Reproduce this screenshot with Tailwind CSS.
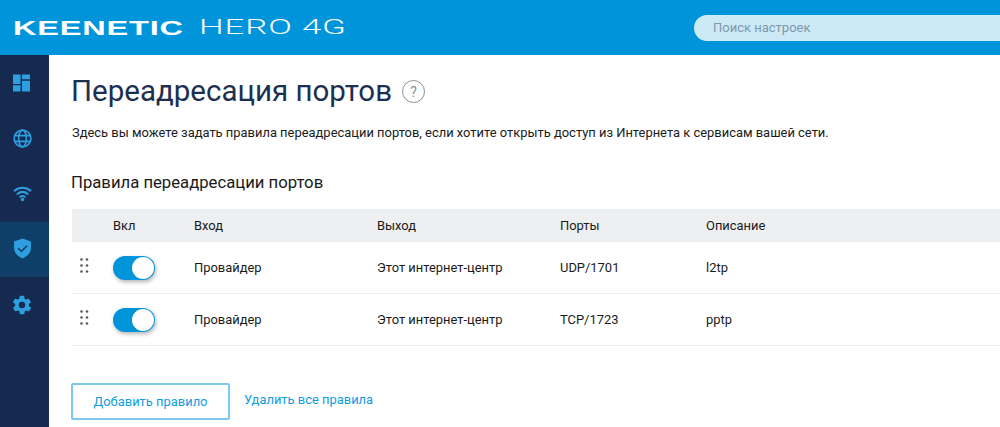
<!DOCTYPE html>
<html lang="ru">
<head>
  <meta charset="UTF-8" />
  <title>Keenetic Hero 4G</title>
  <script src="https://cdn.jsdelivr.net/npm/@tailwindcss/browser@4"></script>
</head>
<body class="h-[427px] w-[1000px] overflow-hidden bg-white font-['Roboto',sans-serif] text-[#1a1a1a]">
  <!-- header -->
  <header class="flex h-[55px] items-center justify-between bg-[#0095da] pl-[13px] text-white">
    <div class="flex h-[55px] items-center whitespace-nowrap">
      <span class="inline-block w-[186px] origin-left scale-x-[1.55] font-['Liberation_Sans',sans-serif] text-[21px] font-bold leading-none tracking-[0.5px]">KEENETIC</span>
      <span class="inline-block w-[146px] origin-left scale-x-[1.66] font-['Roboto',sans-serif] text-[21px] font-light leading-none tracking-[0.5px]">HERO 4G</span>
    </div>
    <div class="flex h-[26px] w-[306px] items-center rounded-l-full bg-[#cce9f8] pl-[19px] text-[13px] text-[#7d98a8]">Поиск настроек</div>
  </header>

  <div class="flex h-[372px]">
    <!-- sidebar -->
    <nav class="flex w-[49px] flex-col bg-[#152a4e] pt-[2px] text-[#2d9fe0]">
      <div class="flex h-[55px] items-center justify-center pb-[3px] pr-[6px]">
        <svg class="h-[18px] w-[17px]" viewBox="0 0 18 18" fill="currentColor"><path d="M0 0h8v10H0zM9.500 0H18v5H9.500zM0 11.500h8V18H0zM9.500 6.500H18V18H9.500z"/></svg>
      </div>
      <div class="flex h-[55px] items-center justify-center pb-[3px] pr-[5px]">
        <svg class="h-[19px] w-[19px]" viewBox="0 0 20 20" fill="none" stroke="currentColor" stroke-width="1.700"><circle cx="10" cy="10" r="8.800"/><ellipse cx="10" cy="10" rx="4" ry="8.800"/><path d="M1.500 7h17M1.500 13h17"/></svg>
      </div>
      <div class="flex h-[55px] items-center justify-center pb-[2px] pr-[5px]">
        <svg class="h-[15px] w-[19px]" viewBox="0 0 20 16" fill="none" stroke="currentColor" stroke-width="2.100" stroke-linecap="round"><path d="M1.500 5c5-4.300 12-4.300 17 0M4.500 8.500c3.300-2.700 7.700-2.700 11 0M7.500 11.500c1.500-1 3.500-1 5 0"/><circle cx="10" cy="14.300" r="0.800" fill="currentColor"/></svg>
      </div>
      <div class="flex h-[55px] items-center justify-center bg-[#0f3f68] pb-[2px] pr-[5px]">
        <svg class="h-[21px] w-[17px]" viewBox="0 0 18 21" fill="currentColor"><path fill-rule="evenodd" d="M9 0l9 3.200v6.300c0 5.200-3.700 9.500-9 11.500-5.300-2-9-6.300-9-11.500V3.200zM13.300 7L7.800 12.300 5 9.600l-1.200 1.200 4 3.900 6.700-6.500z"/></svg>
      </div>
      <div class="flex h-[55px] items-center justify-center pr-[5px]">
        <svg class="h-[22px] w-[22px]" viewBox="0 0 24 24" fill="currentColor"><path d="M19.400 13c.1-.3.100-.7.100-1s0-.7-.1-1l2.100-1.600c.2-.2.200-.4.100-.6l-2-3.500c-.1-.2-.4-.3-.6-.2l-2.500 1c-.5-.4-1.100-.7-1.700-1l-.4-2.600c0-.3-.2-.5-.5-.5h-4c-.3 0-.5.200-.5.500l-.4 2.600c-.6.300-1.200.6-1.700 1l-2.500-1c-.2-.1-.5 0-.6.200l-2 3.500c-.1.200-.1.400.1.600L4.600 11c-.1.300-.1.700-.1 1s0 .7.100 1l-2.100 1.600c-.2.200-.2.400-.1.600l2 3.500c.1.200.4.300.6.200l2.500-1c.5.400 1.100.7 1.700 1l.4 2.600c0 .3.200.5.500.5h4c.3 0 .5-.2.500-.5l.4-2.600c.6-.3 1.200-.6 1.700-1l2.500 1c.2.100.5 0 .6-.2l2-3.500c.1-.2.100-.4-.1-.6zM12 15.500a3.500 3.500 0 1 1 0-7 3.500 3.500 0 0 1 0 7z"/></svg>
      </div>
    </nav>

    <!-- content -->
    <main class="flex-1 pl-[23px]">
      <div class="flex h-[72px] items-center gap-[10px] pt-[1px]">
        <h1 class="ml-[-1px] mt-[1px] text-[29.5px] font-normal leading-none text-[#1b3050]">Переадресация портов</h1>
        <span class="flex h-[23px] w-[23px] items-center justify-center rounded-full border border-[#8a8f96] text-sm text-[#8a8f96]">?</span>
      </div>
      <p class="mt-[-4px] text-[12.93px] leading-[20px]">Здесь вы можете задать правила переадресации портов, если хотите открыть доступ из Интернета к сервисам вашей сети.</p>
      <h2 class="ml-[-1px] mt-[28px] text-[16.7px] font-normal leading-[24px]">Правила переадресации портов</h2>

      <div class="mt-[14px] text-[12.93px]">
        <div class="grid h-[33px] grid-cols-[41px_81px_183px_183px_146px_1fr] items-center bg-[#eeeff1]">
          <span></span><span>Вкл</span><span>Вход</span><span>Выход</span><span>Порты</span><span>Описание</span>
        </div>

        <div class="grid h-[52px] grid-cols-[41px_81px_183px_183px_146px_1fr] items-center border-b border-[#eeeff1]">
          <svg class="mb-[4px] ml-[8px] h-[15px] w-[9px]" viewBox="0 0 9 15" fill="#555b63"><circle cx="1.500" cy="1.500" r="1.300"/><circle cx="7" cy="1.500" r="1.300"/><circle cx="1.500" cy="7.500" r="1.300"/><circle cx="7" cy="7.500" r="1.300"/><circle cx="1.500" cy="13.500" r="1.300"/><circle cx="7" cy="13.500" r="1.300"/></svg>
          <div class="flex h-[24px] w-[42px] justify-end rounded-full bg-[#0095da] shadow-[1px_2px_4px_rgba(0,0,0,0.3)]">
            <div class="m-[1px] h-[22px] w-[22px] rounded-full bg-white"></div>
          </div>
          <span>Провайдер</span><span>Этот интернет-центр</span><span>UDP/1701</span><span>l2tp</span>
        </div>

        <div class="grid h-[52px] grid-cols-[41px_81px_183px_183px_146px_1fr] items-center border-b border-[#eeeff1]">
          <svg class="mb-[4px] ml-[8px] h-[15px] w-[9px]" viewBox="0 0 9 15" fill="#555b63"><circle cx="1.500" cy="1.500" r="1.300"/><circle cx="7" cy="1.500" r="1.300"/><circle cx="1.500" cy="7.500" r="1.300"/><circle cx="7" cy="7.500" r="1.300"/><circle cx="1.500" cy="13.500" r="1.300"/><circle cx="7" cy="13.500" r="1.300"/></svg>
          <div class="flex h-[24px] w-[42px] justify-end rounded-full bg-[#0095da] shadow-[1px_2px_4px_rgba(0,0,0,0.3)]">
            <div class="m-[1px] h-[22px] w-[22px] rounded-full bg-white"></div>
          </div>
          <span>Провайдер</span><span>Этот интернет-центр</span><span>TCP/1723</span><span>pptp</span>
        </div>
      </div>

      <div class="ml-[-1px] mt-[37px] flex items-center gap-[14px] text-[12.93px] text-[#0f9de0]">
        <button class="h-[37px] w-[159px] rounded-[2px] border-2 border-solid border-[#7cc8ee] text-center">Добавить правило</button>
        <a href="#" class="mb-[3px]">Удалить все правила</a>
      </div>
    </main>
  </div>
</body>
</html>
